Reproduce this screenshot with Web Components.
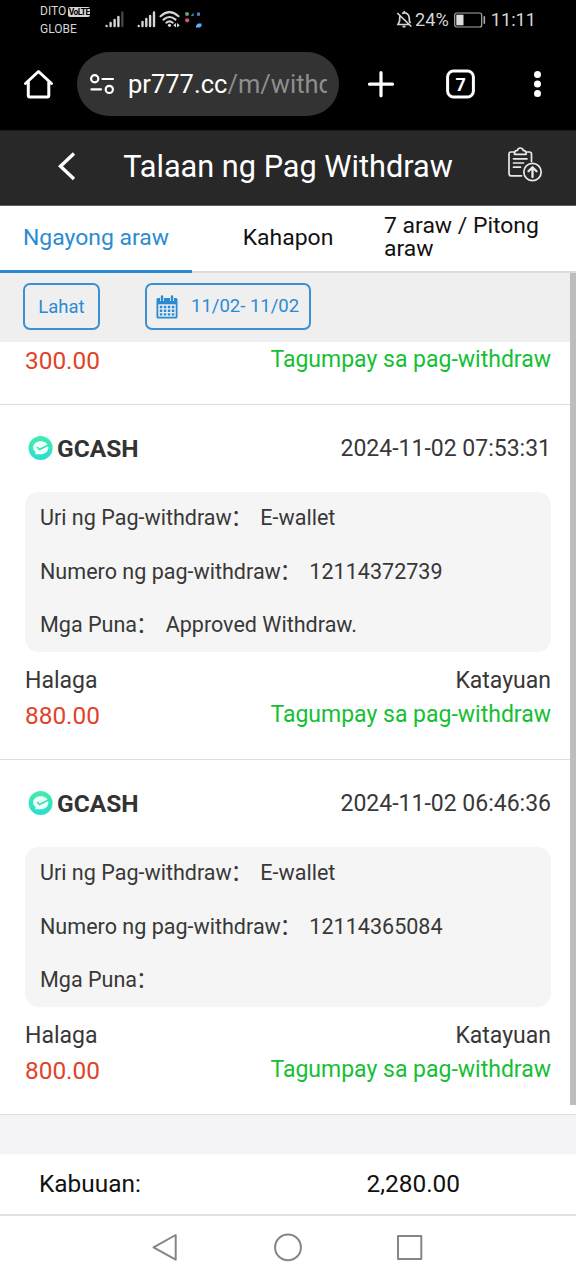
<!DOCTYPE html>
<html lang="fil">
<head>
<meta charset="utf-8">
<title>Talaan ng Pag Withdraw</title>
<style>
html,body{margin:0;background:#fff}
body{width:576px;height:1280px;overflow:hidden;font-family:Roboto,"Noto Sans CJK SC",sans-serif;color:#333}
</style>
</head>
<body>
<withdraw-app></withdraw-app>
<script>
const define = (name, html) => {
  const t = document.createElement('template');
  t.innerHTML = html;
  customElements.define(name, class extends HTMLElement {
    constructor() {
      super();
      this.attachShadow({ mode: 'open' }).append(t.content.cloneNode(true));
    }
  });
};

define('status-bar', `
<style>
:host{display:flex;height:40px;background:#000;color:#d6d6d6;box-sizing:border-box;padding:0 40px}
svg{display:block;flex:none}
.carriers{width:65px;font-size:12px;line-height:17.500px;padding-top:3px}
.row{display:flex;align-items:center;gap:2px}
.volte{background:#d6d6d6;color:#000;font-weight:700;font-size:8.500px;line-height:10px;height:10px;border-radius:2px;width:22px;text-align:center;letter-spacing:-.6px}
.right{margin-left:auto;display:flex;align-items:center;font-size:18.200px;height:39px}
.right span{padding-bottom:1px}
</style>
<div class="carriers"><div class="row"><span>DITO</span><span class="volte">VoLTE</span></div><div>GLOBE</div></div>
<svg width="100" height="40" viewBox="105 0 100 40" fill="none" stroke="#d6d6d6" stroke-width="2.400" stroke-linecap="round">
<path d="M106.600 26v0M110.600 26v-3M114.600 26v-6M118.400 26v-9"/><path d="M122.300 26v-13.500" stroke="#444"/>
<path d="M138.700 26v0M142.500 26v-4M146.300 26v-7M150.100 26v-10M154 26v-13.500"/>
<path d="M160.500 16.200q9-8 18 0M163.500 19.600q6-5.200 12 0M166.300 22.700q3.200-2.600 6.500 0" stroke-width="2.100"/>
<circle cx="169.500" cy="25.300" r="1.600" fill="#d6d6d6" stroke="none"/>
<path d="M176 23l-2.800 2.300 2.800 2.300zM177 23l2.800 2.300-2.800 2.300z" fill="#d6d6d6" stroke="none"/>
<circle cx="187" cy="14" r="2" fill="#5cab6b" stroke="none"/><path d="M190.800 16l2.800-3.500v3.500zM197 12.500h3v3.200h-3z" fill="#4d80d0" stroke="none"/>
<circle cx="187.200" cy="20.300" r="2.100" fill="#d85474" stroke="none"/><path d="M196 27.500v-2l2-2h3.500v2.500l-1.500 1.500z" fill="#65aef4" stroke="none"/>
</svg>
<div class="right">
<svg width="17" height="20" viewBox="0 0 17 20" fill="none" stroke="#d6d6d6" stroke-width="1.700"><path d="M4.200 5.500C3.400 7 3.700 9 3.600 11L2 14.500h11M6 3.400c3.500-1.700 7 .5 7.200 4.100l.2 3.500 1 2.200M8.300 1v2M6.500 16.600h3M1.300 3l14 13.500"/></svg>
<span style="margin-left:2px">24%</span>
<svg width="32" height="16" viewBox="0 0 32 16" style="margin:0 5px 0 5px"><rect x=".7" y="1" width="27" height="14" rx="2" fill="none" stroke="#aaa" stroke-width="1.200"/><rect x="2.300" y="2.700" width="7.200" height="10.600" fill="#ddd"/><rect x="29.500" y="4" width="1.600" height="8" rx=".8" fill="#aaa"/></svg>
<span>11:11</span></div>`);

define('browser-bar', `
<style>
:host{display:flex;align-items:flex-start;height:90px;box-sizing:border-box;padding-top:12px;background:#000;color:#fff}
svg{display:block;flex:none}
.pill{width:262px;height:64px;border-radius:32px;background:#333;display:flex;align-items:center;box-sizing:border-box;padding-left:13px}
.url{margin-left:13px;width:198.500px;overflow:hidden;white-space:nowrap;font-size:25.500px;line-height:34px;padding-top:0}
.url i{font-style:normal;color:#8e8e8e}
</style>
<svg width="77" height="64" viewBox="0 52 77 64" fill="none" stroke="#fff" stroke-width="3" stroke-linejoin="round" stroke-linecap="round"><path d="M25.500 83.500L38.500 71.500l13 12M28.300 82v13.500q0 1.500 1.500 1.500h17.500q1.500 0 1.500-1.500V82"/></svg>
<div class="pill">
<svg width="25" height="22" viewBox="90.500 73 25 22" fill="none" stroke="#fff" stroke-width="2.200" stroke-linecap="round"><circle cx="95.200" cy="78.800" r="3.600"/><path d="M103 79h10.500M92 89.400h9.500"/><circle cx="109.800" cy="89.400" r="3.600"/></svg>
<div class="url">pr777.cc<i>/m/withd</i></div>
</div>
<svg width="237" height="64" viewBox="339 52 237 64" fill="none" stroke="#fff" stroke-width="3.200" stroke-linecap="round"><path d="M369.500 84.200h23M381 72.700v23"/><rect x="447.600" y="71" width="25.800" height="26" rx="6" stroke-width="3"/><g fill="#fff" stroke="none"><circle cx="537.500" cy="74.500" r="3.500"/><circle cx="537.500" cy="84" r="3.500"/><circle cx="537.500" cy="93.500" r="3.500"/><text x="460.700" y="90.800" font-size="18" font-weight="700" text-anchor="middle">7</text></g></svg>`);

define('page-header', `
<style>
:host{display:flex;height:76px;box-sizing:border-box;background:#282828;border-top:1px solid #1a1a1a;border-bottom:1px solid #606060;color:#fff;align-items:center}
svg{display:block;flex:none}
.t{width:330px;text-align:center;font-size:30.700px;line-height:40px;white-space:nowrap;padding-bottom:2px}
</style>
<svg width="123" height="74" viewBox="0 131 123 74" fill="none" stroke="#fff" stroke-width="3.400"><path d="M74 153.500L60.500 166.300 74 179"/></svg>
<div class="t"><slot></slot></div>
<svg width="123" height="74" viewBox="453 131 123 74" fill="none" stroke="#e8e8e8" stroke-width="1.700" stroke-linejoin="round" stroke-linecap="round"><path d="M521.500 175.800H511q-2 0-2-2V154q0-2 2-2h4M526 152h3.500q2 0 2 2v7.500M514.500 154.300v-1.500q0-2.300 3-2.500 .3-2.300 2.800-2.300t2.800 2.300q3 .2 3 2.500v1.500zM513.500 158.800h13.500M513.500 163h10M513.500 167.200h7"/><circle cx="532.500" cy="172" r="8.700"/><path d="M532.500 177v-9.500M528.500 171.200l4-4 4 4" stroke-width="2.300"/></svg>`);

define('tab-item', `
<style>
:host{display:flex;flex:1;align-items:center;justify-content:center;height:67px;box-sizing:border-box;border-bottom:2px solid #dcdcdc;color:#111;font-size:22.950px;line-height:23px;padding-bottom:3px}
:host([active]){color:#2a8bd3;border-bottom:3px solid #2a8bd3;padding-bottom:2px}
:host([wide]){justify-content:flex-start;padding-bottom:4px}
</style><slot></slot>`);

define('filter-bar', `
<style>
:host{display:flex;height:69px;box-sizing:border-box;background:#efefef;padding:10px 0 0 23px;gap:45px;color:#2a8bd3}
div{box-sizing:border-box;height:47px;border:2px solid #3c90d0;border-radius:7px;display:flex;align-items:center}
.a{width:77px;justify-content:center;font-size:18.500px}
.b{width:166px;padding-left:9px;font-size:18.500px;gap:13px}
span{white-space:nowrap;padding-top:1px}.b span{padding:0 0 2px}
</style>
<div class="a"><span>Lahat</span></div>
<div class="b"><svg width="22" height="24" viewBox="0 0 22 24"><path d="M2 3h18q1.500 0 1.500 1.500V22q0 1.500-1.500 1.500H2Q.5 23.500.5 22V4.500Q.5 3 2 3z" fill="#2a8bd3"/><path d="M2.300 9.300h17.400v12.400H2.300z" fill="#efefef"/><g stroke="#efefef" stroke-width="4"><path d="M6 1v5M16 1v5"/></g><g stroke="#2a8bd3" stroke-width="2.400" stroke-linecap="round"><path d="M6 1.500v3.500M16 1.500v3.500"/></g><path d="M3.800 12h14.500M3.800 15.700h14.500M3.800 19.400h14.500" stroke="#2a8bd3" stroke-width="2.400" stroke-dasharray="2.500 1.500"/></svg><span>11/02- 11/02</span></div>`);

define('record-result', `
<style>
:host{display:flex;justify-content:space-between;height:34px;padding:0 25px;white-space:nowrap;line-height:34px}
.m{color:#e0432a;font-size:24.400px;padding-top:2px;height:32px}
.s{color:#15bf34;font-size:23px;padding-top:1px;height:33px}
</style><span class="m"><slot></slot></span><span class="s">Tagumpay sa pag-withdraw</span>`);

define('detail-line', `
<style>
:host{display:flex;align-items:center;height:53.600px;font-size:21.550px;line-height:30px;white-space:nowrap}
.l{height:30px}.c{margin-left:-1px}.v{margin-left:8px;height:30px}
</style><span class="l"><slot name="label"></slot><span class="c">：</span></span><span class="v"><slot></slot></span>`);

define('withdraw-record', `
<style>
:host{display:flex;flex-direction:column;height:355px;box-sizing:border-box;border-bottom:1px solid #dedede;background:#fff;color:#383838}
.head{height:86.500px;display:flex;align-items:center;padding:0 25px 0 28px;box-sizing:border-box;flex:none}
.head b{font-size:24.500px;margin-left:4px;color:#333}
.date{margin-left:auto;font-size:23px}
.box{margin:0 25px;background:#f5f5f5;border-radius:14px;height:160.800px;padding-left:15px;flex:none}
.cap{display:flex;justify-content:space-between;padding:13px 25px 0;font-size:23px;line-height:32px;height:32px}
svg{display:block}
record-result{margin-top:-.5px}
</style>
<div class="head"><svg width="25" height="26" viewBox="0 0 25 26"><defs><linearGradient id="g" x1="0" y1="0" x2="0" y2="1"><stop stop-color="#42edaa"/><stop offset="1" stop-color="#2adcd0"/></linearGradient></defs><circle cx="12.600" cy="13" r="12" fill="url(#g)"/><path d="M5 12.800C5 9 8.500 6.300 12.700 6.300S20.400 9 20.400 12.800s-3.500 6.500-7.700 6.500H7l.6-2.400Q5 15.300 5 12.800z" fill="#effffc"/><path d="M9 12l2.500 2.500 10-5" fill="none" stroke="#35dfb9" stroke-width="1.500"/></svg><b>GCASH</b><span class="date"><slot name="date"></slot></span></div>
<div class="box"><detail-line><span slot="label">Uri ng Pag-withdraw</span>E-wallet</detail-line><detail-line><span slot="label">Numero ng pag-withdraw</span><slot name="number"></slot></detail-line><detail-line><span slot="label">Mga Puna</span><slot name="note"></slot></detail-line></div>
<div class="cap"><span>Halaga</span><span>Katayuan</span></div>
<record-result><slot name="amount"></slot></record-result>`);

define('record-list', `
<style>
:host{display:block;position:relative;height:773px}
.first{height:63px;box-sizing:border-box;border-bottom:1px solid #dedede}
.first record-result{margin-top:-.5px}
.thumb{position:absolute;right:0;top:-69px;width:6px;height:832px;background:#bdbdbd}
.first{display:flow-root}
</style>
<div class="first"><record-result>300.00</record-result></div>
<slot></slot><div class="thumb"></div>`);

define('total-bar', `
<style>
:host{display:grid;grid-template-columns:327.500px 1fr;height:101px;box-sizing:border-box;border-top:39px solid #f3f3f8;border-bottom:2px solid #e0e0e0;padding:0 0 1px 39px;align-items:center;color:#111;font-size:24.400px}
</style><span>Kabuuan:</span><span><slot></slot></span>`);

define('nav-bar', `
<style>:host{display:block;height:64px;background:#fff}svg{display:block}</style>
<svg width="576" height="64" viewBox="0 1216 576 64" fill="none" stroke="#858585" stroke-width="2" stroke-linejoin="round"><path d="M175.700 1235v24.700L153.500 1247.400z"/><circle cx="288" cy="1247.400" r="12.900"/><rect x="398" y="1236" width="23.300" height="23"/></svg>`);

define('withdraw-app', `
<style>
:host{display:flex;flex-direction:column;width:576px;height:1280px;overflow:hidden}
.tabs{display:flex;height:67px}
status-bar,browser-bar,page-header,.tabs,filter-bar,record-list,total-bar,nav-bar{flex:none}
</style>
<status-bar></status-bar><browser-bar></browser-bar>
<page-header>Talaan ng Pag Withdraw</page-header>
<div class="tabs"><tab-item active>Ngayong araw</tab-item><tab-item>Kahapon</tab-item><tab-item wide>7 araw / Pitong araw</tab-item></div>
<filter-bar></filter-bar>
<record-list>
<withdraw-record><span slot="date">2024-11-02 07:53:31</span><span slot="number">12114372739</span><span slot="note">Approved Withdraw.</span><span slot="amount">880.00</span></withdraw-record>
<withdraw-record><span slot="date">2024-11-02 06:46:36</span><span slot="number">12114365084</span><span slot="amount">800.00</span></withdraw-record>
</record-list>
<total-bar>2,280.00</total-bar><nav-bar></nav-bar>`);
</script>
</body>
</html>
